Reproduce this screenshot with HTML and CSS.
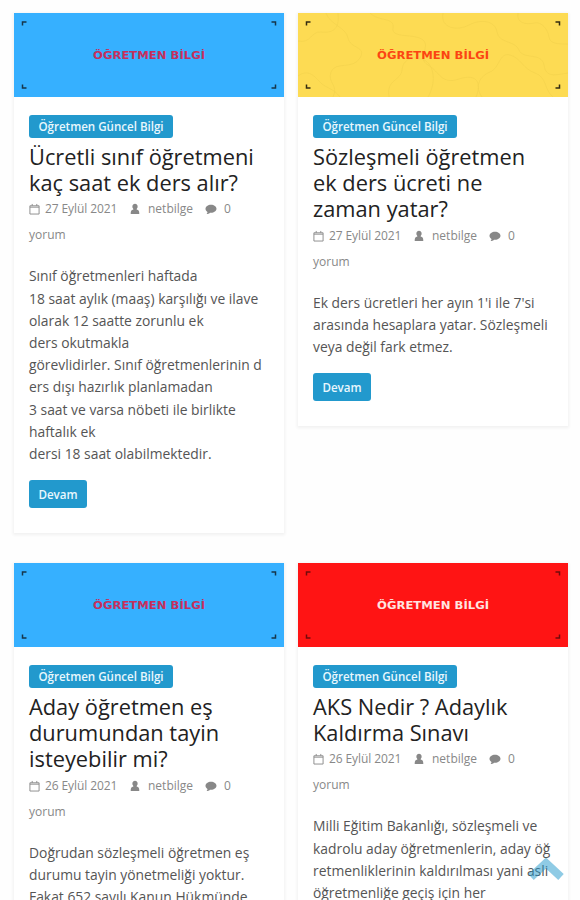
FILE: index.html
```html
<!DOCTYPE html>
<html lang="tr">
<head>
<meta charset="utf-8">
<title>Öğretmen Bilgi</title>
<link rel="stylesheet" href="styles.css">
</head>
<body>
<svg class="defs" width="0" height="0">
  <symbol id="calendar" viewBox="0 0 12 12"><path d="M1 2.5h10v9H1zM1 4h10M3.5 .5v2M8.5 .5v2" fill="none" stroke="currentColor"/></symbol>
  <symbol id="user" viewBox="0 0 10 12"><path d="M5 .8a2.6 2.8 0 0 1 1.800 4.900l-.2.8C8.800 7 9.300 8 9.300 11H.7C.7 8 1.200 7 3.400 6.500l-.2-.8A2.600 2.800 0 0 1 5 .8z" fill="currentColor"/></symbol>
  <symbol id="comment" viewBox="0 0 12 12"><path d="M6 1.800c3 0 5.500 1.700 5.500 4S9 9.800 6 9.800l-1-.1C4 10.700 2.800 11 1.600 11c.6-.6.9-1.200.9-2C1.200 8.200.5 7.100.5 5.800c0-2.300 2.500-4 5.500-4z" fill="currentColor"/></symbol>
  <symbol id="corners" viewBox="0 0 270 84"><path d="M8.500 12.500V9h4M257.500 9h4v3.500M8.500 71.500V75h4M257.500 75h4v-3.500" fill="none" stroke="currentColor" stroke-width="1.500"/></symbol>
</svg>
<main class="posts">
  <article class="card">
    <svg class="banner blue" viewBox="0 0 270 84"><use href="#corners"/><text x="79" y="46" textLength="112" lengthAdjust="spacingAndGlyphs">ÖĞRETMEN BİLGİ</text></svg>
    <div class="content">
      <a class="badge">Öğretmen Güncel Bilgi</a>
      <h2>Ücretli sınıf öğretmeni<br>kaç saat ek ders alır?</h2>
      <div class="meta"><svg class="cal"><use href="#calendar"/></svg><span class="date">27 Eylül 2021</span><svg class="usr"><use href="#user"/></svg><span class="author">netbilge</span><svg class="com"><use href="#comment"/></svg><span>0</span><br>yorum</div>
      <p>Sınıf öğretmenleri haftada<br>18 saat aylık (maaş) karşılığı ve ilave<br>olarak 12 saatte zorunlu ek<br>ders okutmakla<br>görevlidirler. Sınıf öğretmenlerinin d<br>ers dışı hazırlık planlamadan<br>3 saat ve varsa nöbeti ile birlikte<br>haftalık ek<br>dersi 18 saat olabilmektedir.</p>
      <a class="more">Devam</a>
    </div>
  </article>
  <article class="card">
    <svg class="banner yellow" viewBox="0 0 270 84"><path class="contour" d="M0 28c13 3 13-10 23-9s19-1 17-19M28 0c4 12 20 14 22 25s19 8 12 20-25 3-29 14 8 13 2 25M0 63c12-9 19 4 24 8s12 5 18 13M72 0c9 9 25 4 23 15s22 5 30 12-7 18 5 25 13 20 31 14 23 4 17 18M91 84c-3-18 12-16 13-27s11-15 22-10 12 24 4 37M145 0c-3 16 15 18 26 12s26-5 28 7 18 8 22 18 23 2 25 15 11 10 24 8M184 84c-8-11-2-21 8-25s9-20 20-17 13 14 25 18 9 17 18 24M220 0c-2 10 8 12 16 10s14 7 15 14 9 7 19 7"/><use href="#corners"/><text x="79" y="46" textLength="112" lengthAdjust="spacingAndGlyphs">ÖĞRETMEN BİLGİ</text></svg>
    <div class="content">
      <a class="badge">Öğretmen Güncel Bilgi</a>
      <h2>Sözleşmeli öğretmen<br>ek ders ücreti ne<br>zaman yatar?</h2>
      <div class="meta"><svg class="cal"><use href="#calendar"/></svg><span class="date">27 Eylül 2021</span><svg class="usr"><use href="#user"/></svg><span class="author">netbilge</span><svg class="com"><use href="#comment"/></svg><span>0</span><br>yorum</div>
      <p>Ek ders ücretleri her ayın 1'i ile 7'si<br>arasında hesaplara yatar. Sözleşmeli<br>veya değil fark etmez.</p>
      <a class="more">Devam</a>
    </div>
  </article>
  <article class="card">
    <svg class="banner blue" viewBox="0 0 270 84"><use href="#corners"/><text x="79" y="46" textLength="112" lengthAdjust="spacingAndGlyphs">ÖĞRETMEN BİLGİ</text></svg>
    <div class="content">
      <a class="badge">Öğretmen Güncel Bilgi</a>
      <h2>Aday öğretmen eş<br>durumundan tayin<br>isteyebilir mi?</h2>
      <div class="meta"><svg class="cal"><use href="#calendar"/></svg><span class="date">26 Eylül 2021</span><svg class="usr"><use href="#user"/></svg><span class="author">netbilge</span><svg class="com"><use href="#comment"/></svg><span>0</span><br>yorum</div>
      <p>Doğrudan sözleşmeli öğretmen eş<br>durumu tayin yönetmeliği yoktur.<br>Fakat 652 sayılı Kanun Hükmünde</p>
    </div>
  </article>
  <article class="card">
    <svg class="banner red" viewBox="0 0 270 84"><use href="#corners"/><text x="79" y="46" textLength="112" lengthAdjust="spacingAndGlyphs">ÖĞRETMEN BİLGİ</text></svg>
    <div class="content">
      <a class="badge">Öğretmen Güncel Bilgi</a>
      <h2>AKS Nedir ? Adaylık<br>Kaldırma Sınavı</h2>
      <div class="meta"><svg class="cal"><use href="#calendar"/></svg><span class="date">26 Eylül 2021</span><svg class="usr"><use href="#user"/></svg><span class="author">netbilge</span><svg class="com"><use href="#comment"/></svg><span>0</span><br>yorum</div>
      <p>Milli Eğitim Bakanlığı, sözleşmeli ve<br>kadrolu aday öğretmenlerin, aday öğ<br>retmenliklerinin kaldırılması yani asli<br>öğretmenliğe geçiş için her</p>
    </div>
  </article>
</main>
<a class="top"><svg viewBox="0 0 36 24"><path d="M3 20 18 6l15 14" fill="none" stroke="currentColor" stroke-width="8"/></svg></a>
</body>
</html>
```

FILE: styles.css
```css
* { box-sizing: border-box; }
body {
  margin: 0;
  height: 900px;
  overflow: hidden;
  background: #fefefe;
  font-family: "Open Sans", sans-serif;
}
.defs { position: absolute; }
.posts {
  display: grid;
  grid-template-columns: 270px 270px;
  grid-template-rows: 520px auto;
  gap: 30px 14px;
  align-items: start;
  padding: 13px 0 0 14px;
}
.card {
  background: #fff;
  box-shadow: 0 1px 3px 1px rgba(0, 0, 0, .055);
}
.banner {
  display: block;
  width: 270px;
  height: 84px;
  color: #17354a;
}
.banner text {
  font: bold 10px "DejaVu Sans", sans-serif;
}
.blue { background: #36b0ff; }
.blue text { fill: #c52f5c; }
.yellow { background: #fddb53; color: #332b10; }
.yellow text { fill: #fb4512; }
.contour { fill: none; stroke: #f3d24e; stroke-width: .7; }
.red { background: #ff1414; color: #700b0b; }
.red text { fill: #ffe4e0; }
.content { padding: 18px 0 25px 15px; white-space: nowrap; }
.badge, .more {
  display: block;
  width: 144px;
  height: 23px;
  border-radius: 3px;
  background: #2299cd;
  color: #e9f7fd;
  font-size: 11.600px;
  font-weight: 600;
  line-height: 24px;
  text-align: center;
}
.badge { letter-spacing: -.02px; }
.more { width: 58px; height: 28px; line-height: 29px; }
h2 {
  margin: 6px 0 0;
  color: #222;
  font-size: 21.800px;
  font-weight: 400;
  line-height: 26.200px;
}
.meta {
  color: #888;
  font-size: 12px;
  line-height: 26px;
}
.meta svg { height: 12px; vertical-align: -2px; }
.meta .cal { width: 11px; margin-right: 5px; }
.meta .usr { width: 10px; margin: 0 8px 0 12px; }
.meta .com { width: 12px; margin: 0 7px 0 12px; }
.date, .author { display: inline-block; }
.date { width: 73px; letter-spacing: -.1px; }
.author { width: 45px; }
p {
  margin: 17px 0 15px;
  color: #555;
  font-size: 13.860px;
  line-height: 22.200px;
}
.top {
  position: absolute;
  left: 528px;
  top: 857px;
  width: 36px;
  height: 24px;
  color: #2299cd;
  opacity: .5;
}
.top svg { display: block; }
```
